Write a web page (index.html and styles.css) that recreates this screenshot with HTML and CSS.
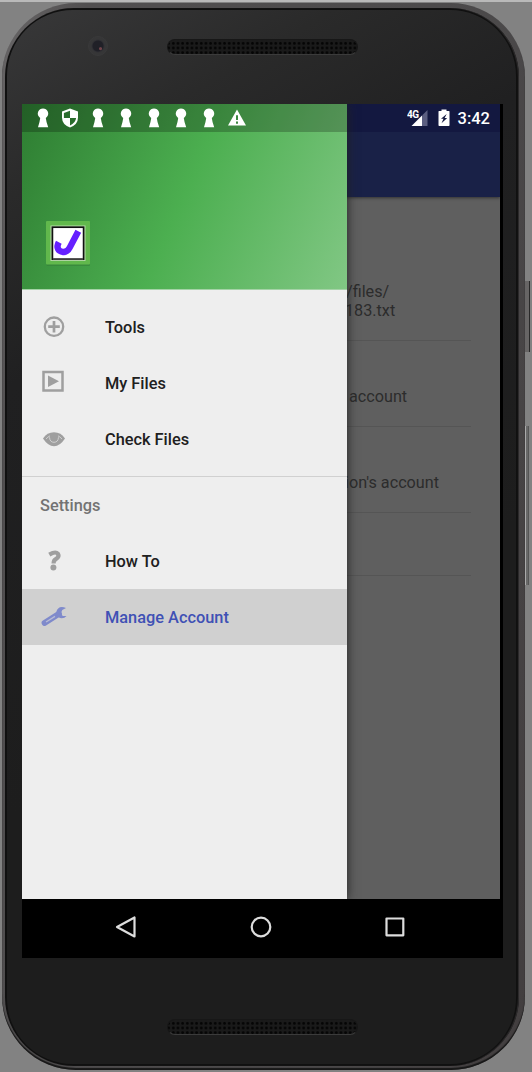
FILE: index.html
```html
<!DOCTYPE html>
<html lang="en">
<head>
<meta charset="utf-8">
<title>Manage Account</title>
<link rel="stylesheet" href="styles.css">
</head>
<body>
<div class="stage">
  <i class="power"></i><i class="volume"></i>
  <div class="frame"><div class="rim"><div class="face">
    <div class="top-bezel">
      <i class="camera"></i>
      <i class="speaker"></i>
    </div>
    <div class="display">
      <main class="screen">
        <header class="appbar">
          <div class="status">
            <svg width="22" height="20" viewBox="0 0 22 20"><text class="net" x="0" y="9.500">4G</text><path d="M20.500 2v16H15V7.500z" fill="#5b5e80"/><path d="M4.500 18L15 7.500V18z" fill="#fff"/></svg>
            <svg class="battery" width="12" height="18" viewBox="0 0 12 18"><path fill="#fff" fill-rule="evenodd" d="M1 2h2.500V.5h5V2H11q.5 0 .5.6v13.600q0 .8-.7.8H1.200q-.7 0-.7-.8V2.600Q.5 2 1 2zM8.700 5L3 9.700h2.500L3.500 14.300 9.200 9H6.600z"/></svg>
            <span class="clock">3:42</span>
          </div>
        </header>
        <section class="content">
          <div class="row first">/files/<br><span class="number">183.txt</span></div>
          <div class="row"><span class="second">account</span></div>
          <div class="row"><span class="third">ion's account</span></div>
          <div class="row last"></div>
        </section>
        <aside class="drawer">
          <div class="hero">
            <div class="notices">
              <svg viewBox="0 0 16 20"><path class="key" d="M8 .6a5.200 5 0 0 0-3.800 8.400l1 1Q4.800 14 3 19.300h10.200Q11.200 14 10.800 10l1-1A5.200 5 0 0 0 8 .6z"/></svg>
              <svg viewBox="0 0 16 20"><path fill="#fff" d="M8 .5l8 3v6q0 7-8 10Q0 16.500 0 9.500v-6z"/><path fill="#2a6c2d" d="M8 2.700V10H1.900V5zM8 10h6.100Q13.500 15 8 17.500z"/></svg>
              <svg viewBox="0 0 16 20"><path class="key" d="M8 .6a5.200 5 0 0 0-3.800 8.400l1 1Q4.800 14 3 19.300h10.200Q11.200 14 10.800 10l1-1A5.200 5 0 0 0 8 .6z"/></svg>
              <svg viewBox="0 0 16 20"><path class="key" d="M8 .6a5.200 5 0 0 0-3.800 8.400l1 1Q4.800 14 3 19.300h10.200Q11.200 14 10.800 10l1-1A5.200 5 0 0 0 8 .6z"/></svg>
              <svg viewBox="0 0 16 20"><path class="key" d="M8 .6a5.200 5 0 0 0-3.800 8.400l1 1Q4.800 14 3 19.300h10.200Q11.200 14 10.800 10l1-1A5.200 5 0 0 0 8 .6z"/></svg>
              <svg viewBox="0 0 16 20"><path class="key" d="M8 .6a5.200 5 0 0 0-3.800 8.400l1 1Q4.800 14 3 19.300h10.200Q11.200 14 10.800 10l1-1A5.200 5 0 0 0 8 .6z"/></svg>
              <svg viewBox="0 0 16 20"><path class="key" d="M8 .6a5.200 5 0 0 0-3.800 8.400l1 1Q4.800 14 3 19.300h10.200Q11.200 14 10.800 10l1-1A5.200 5 0 0 0 8 .6z"/></svg>
              <svg class="wide" viewBox="0 0 18 20"><path fill="#fff" fill-rule="evenodd" d="M9 1.500l9 16H0zM8 7.200v4.800h2V7.200zM8 13.500v2.200h2v-2.200z"/></svg>
            </div>
            <svg class="logo" width="46" height="48" viewBox="0 0 46 48">
              <rect x="1.500" y="2.500" width="43.500" height="43.500" rx="1" fill="#368039" opacity=".6"/>
              <rect x="1" y="1" width="44" height="43.500" rx="1" fill="#61b84c"/>
              <rect x="5.500" y="5.500" width="35" height="35.500" fill="#b7dcaa"/>
              <rect x="7.400" y="7.200" width="31.200" height="32" fill="#fff" stroke="#111" stroke-width="1.700"/>
              <path d="M8 38.900h30" stroke="#555" stroke-width="1.500"/>
              <path d="M13.800 22.300C11 27.500 13 31.300 18.300 32c3.200.2 5-1.700 6.400-4.400L33.300 11.200" fill="none" stroke="#651fff" stroke-width="6.400"/>
            </svg>
          </div>
          <nav class="menu">
            <a class="item"><svg viewBox="0 0 28 28"><g fill="none" stroke="#9f9f9f"><circle cx="14" cy="13.700" r="9.200" stroke-width="2.300"/><path d="M14 7.900v11.600M8.200 13.700h11.600" stroke-width="2.700"/></g></svg><span>Tools</span></a>
            <a class="item"><svg viewBox="0 0 28 28"><path d="M3.500 3.100h19v18.300h-19z" fill="none" stroke="#9f9f9f" stroke-width="2.500"/><path fill="#9f9f9f" d="M8 6.500l11 5.800-11 5.700z"/></svg><span>My Files</span></a>
            <a class="item"><svg viewBox="0 0 28 28"><path fill="#9f9f9f" d="M3 13.500Q7 7.200 14 7.200t11 6.300Q20 21.200 14 21.200T3 13.500z"/><path d="M6 14q2-2.200 4-3.200M22 14q-2-2.200-4-3.200M9.500 12.300q.3 5 4.500 5t4.500-5" fill="none" stroke="#cfcfcf" stroke-width="1"/></svg><span>Check Files</span></a>
            <div class="heading">Settings</div>
            <a class="item"><svg viewBox="0 0 28 28"><path d="M9.300 7.600q6.300-3.700 8.700-.8 1.800 3-2.500 5.600-1.900 1.200-1.900 4" fill="none" stroke="#9f9f9f" stroke-width="4.200"/><circle cx="13.400" cy="20.600" r="3" fill="#9f9f9f"/></svg><span>How To</span></a>
            <a class="item active"><svg viewBox="0 0 28 28"><path d="M4.500 20L19 10.800" stroke="#7f8acb" stroke-width="5.800" stroke-linecap="round"/><path d="M26 5.100q-5-2.300-7.800.3-2.600 2.500-1.500 5.800 1.500 4 5 4 3 0 4.800-2.300h-3.700l-2-2.500 1.500-3.500z" fill="#7f8acb"/><path d="M6 19l9-5.600" stroke="#b9bdd5" stroke-width="1.300"/></svg><span>Manage Account</span></a>
          </nav>
        </aside>
      </main>
      <footer class="navbar">
        <svg viewBox="0 0 24 24"><path d="M20.500 2.500v19L3 12z"/></svg>
        <svg viewBox="0 0 24 24"><circle cx="12" cy="12" r="9.300"/></svg>
        <svg viewBox="0 0 24 24"><path d="M3.500 3.500h16.800v16.800H3.500z"/></svg>
      </footer>
    </div>
    <div class="bottom-bezel"><i class="speaker"></i></div>
  </div></div></div>
</div>
</body>
</html>
```
FILE: styles.css
```css
* { box-sizing: border-box; }
body { margin: 0; background: #828282; font-family: Roboto, "Liberation Sans", sans-serif; }
svg { display: block; flex: none; }
.stage { position: relative; width: 532px; height: 1072px; padding: 1px 7px 2px 2px; border-top: 2px solid #b9b9b9; overflow: hidden; }
.power, .volume { position: absolute; }
.power { left: 525px; top: 279px; width: 5px; height: 71px; background: #676565; border-right: 1px solid #292929; }
.volume { left: 525px; top: 424px; width: 4px; height: 159px; background: #696969; border-left: 1px solid #aaa; border-right: 1px solid #555; }
.frame { height: 1067px; padding: 5px 6px 4px 3px; border-radius: 74px; background: linear-gradient(100deg, #686667 0, #514f50 12%, #4b494a 70%, #423e3f 100%); box-shadow: inset 0 -2px 1px #171717; }
.rim { height: 1058px; padding: 2px 3px 2px 2px; border-radius: 69px; background: #101010; box-shadow: inset -1px 0 1px #302e2f; }
.face { height: 1054px; border-radius: 66px; background: linear-gradient(150deg, #383839 0, #2a2a2a 14%, #202021 28%, #1d1d1d 60%); padding-left: 15px; }
.top-bezel { height: 94px; display: flex; align-items: flex-start; padding: 26px 0 0 66px; }
.camera { width: 20px; height: 20px; border-radius: 50%; background: radial-gradient(circle at 64% 65%, #70434a 0 1px, transparent 2px), radial-gradient(circle, #202027 0 5px, #303034 6px, #363637 7px); border: 1px solid #39393a; }
.speaker { display: block; width: 191px; height: 16px; border-radius: 8px; background: radial-gradient(circle, #050505 0 1px, transparent 1.700px) 3px 1px / 4.670px 4.670px, #1a1a1a; border: 1px solid #171717; border-bottom-color: #3b3b3b; }
.top-bezel .speaker { margin: 3px 0 0 59px; }
.display { width: 481px; height: 854px; background: #000; }
.screen { position: relative; width: 478px; height: 795px; overflow: hidden; background: #5f5f5f; }
.appbar { position: relative; height: 93px; background: #192147; box-shadow: 0 1px 3px #333; }
.status { height: 28px; background: #131840; display: flex; justify-content: flex-end; align-items: center; padding-right: 10px; }
.net { font: 700 10px Roboto, sans-serif; fill: #fff; letter-spacing: -.6px; }
.battery { margin: 0 8px 0 9px; }
.clock { color: #fff; font-size: 16.500px; font-weight: 500; line-height: 29px; }
.content { padding: 0 29px 0 0; color: #2c2c2c; font-size: 16.200px; line-height: 19px; }
.row { height: 86px; padding: 46px 0 0 324px; border-bottom: 1px solid #555; white-space: nowrap; }
.row.first { height: 144px; padding-top: 85px; }
.row.last { height: 63px; }
.number { margin-left: -1px; }
.second { margin-left: 3px; }
.third { margin-left: -1px; }
.drawer { position: absolute; left: 0; top: 0; width: 325px; height: 795px; background: #eee; box-shadow: 0 0 10px #222; }
.hero { height: 186px; background: linear-gradient(114deg, #2e7d32 0, #4caf50 50%, #81c784 100%); border-bottom: 1px solid #a5d3a7; }
.notices { display: flex; height: 28px; gap: 11.800px; padding: 4px 12.500px; background: rgba(0,0,0,.23); }
.notices svg { width: 16px; height: 20px; }
.notices .wide { width: 18px; margin-left: -1px; }
.key { fill: #fff; }
.logo { margin: 88px 0 0 23px; }
.menu { padding-top: 9px; }
.item { display: flex; height: 56px; align-items: center; padding-left: 18px; color: #202020; font-size: 16.350px; font-weight: 500; }
.item svg { width: 28px; height: 28px; margin-right: 37px; }
.item.active { background: #d0d0d0; color: #3f51b5; }
.heading { height: 57px; margin-top: 9px; border-top: 1px solid #d0d0d0; padding: 0 18px; color: #737373; font-size: 16.350px; font-weight: 500; line-height: 58px; }
.navbar { height: 56px; display: flex; align-items: center; padding-left: 92px; gap: 110.500px; }
.navbar svg { width: 24px; height: 24px; fill: none; stroke: #ddd; stroke-width: 2.200; stroke-linejoin: round; }
.bottom-bezel { padding: 61px 0 0 145px; }
```
